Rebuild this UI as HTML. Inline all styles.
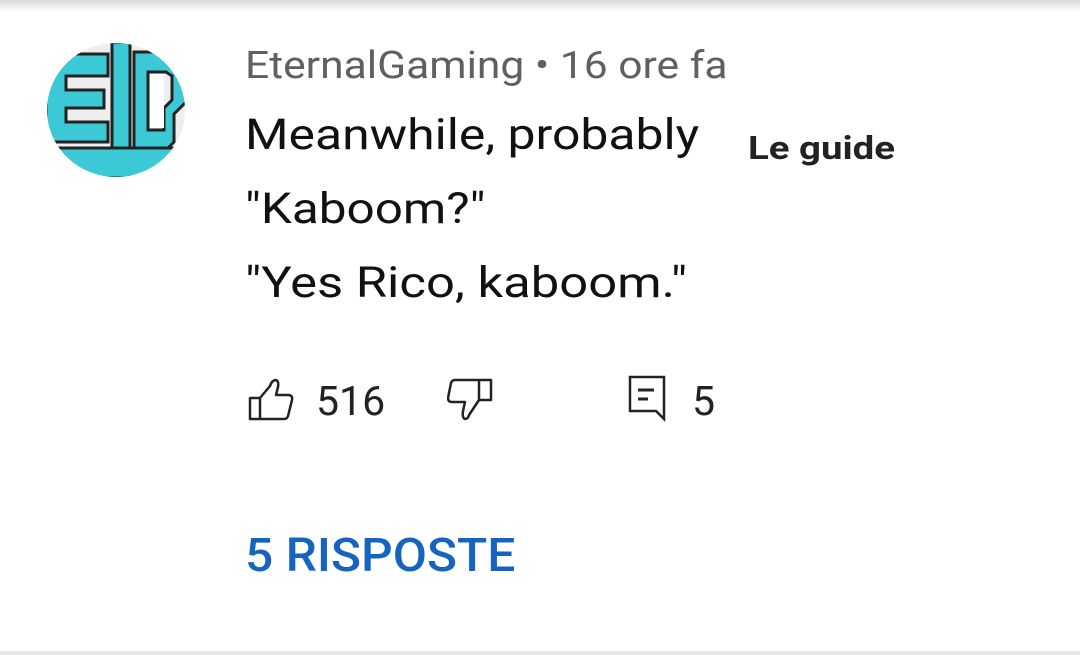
<!DOCTYPE html>
<html><head><meta charset="utf-8"><style>
html,body{margin:0;padding:0;}
body{width:1080px;height:655px;background:#fff;position:relative;overflow:hidden;font-family:"Roboto","Liberation Sans",sans-serif;}
.shadow{position:absolute;left:0;top:0;width:1080px;height:12px;background:linear-gradient(#d8d8d8,#fff);}
.bottom{position:absolute;left:0;top:651px;width:1080px;height:4px;background:#e6e6e6;}
.t{position:absolute;white-space:nowrap;transform-origin:0 50%;}
</style></head><body>
<div class="shadow"></div>
<svg style="position:absolute;left:46px;top:42px" width="140" height="136" viewBox="0 0 140 136">
<defs><clipPath id="c"><ellipse cx="70" cy="68" rx="69" ry="67"/></clipPath></defs>
<g clip-path="url(#c)">
<rect width="140" height="136" fill="#eeeeee"/>
<g fill="#3cc9d6" stroke="#222" stroke-width="3">
<path d="M0 12 H62 V34 H20 V48 H58 V66 H20 V80 H62 V100 H0 Z"/>
<path d="M66 0 H84 V136 H66 Z"/>
<path d="M88 10 H128 L140 22 V60 L128 72 V100 L118 110 H88 Z M102 30 V88 H118 V66 L126 58 V34 L120 30 Z"/>
<path d="M0 106 H140 V136 H0 Z"/>
</g>
<rect x="104" y="32" width="14" height="54" fill="#fff"/>
</g>
</svg>
<div class="t" style="left:245px;top:44px;font-size:38px;color:#606060;transform:scaleX(1.12);">EternalGaming • 16 ore fa</div>
<div class="t" style="left:245px;top:110px;font-size:43px;color:#111;transform:scaleX(1.16);">Meanwhile, probably</div>
<div class="t" style="left:748px;top:129px;font-size:32px;font-weight:bold;color:#222;transform:scaleX(1.2);">Le guide</div>
<div class="t" style="left:245px;top:184px;font-size:43px;color:#111;transform:scaleX(1.15);">"Kaboom?"</div>
<div class="t" style="left:245px;top:258px;font-size:43px;color:#111;transform:scaleX(1.18);">"Yes Rico, kaboom."</div>
<svg style="position:absolute;left:248px;top:378px" width="48" height="44" viewBox="0 0 48 44" fill="none" stroke="#222" stroke-width="2.5" stroke-linejoin="round">
<path d="M2 20 H12 V41 H2 Z M12 20 L22 8 Q24 2 28 2 Q31 3 30 9 L28 17 H41 Q45 18 44 22 L40 38 Q39 41 36 41 H12"/>
</svg>
<div class="t" style="left:316px;top:378px;font-size:41px;color:#222;">516</div>
<svg style="position:absolute;left:447px;top:378px" width="46" height="44" viewBox="0 0 46 44" fill="none" stroke="#222" stroke-width="2.5" stroke-linejoin="round">
<path d="M32 2 H44 V22 H32 Z M32 2 H8 Q5 2 4 5 L1 20 Q1 24 5 24 H18 L16 33 Q15 40 18 41 Q21 41 22 37 L32 22"/>
</svg>
<svg style="position:absolute;left:628px;top:375px" width="40" height="48" viewBox="0 0 40 48" fill="none" stroke="#222" stroke-width="2.5">
<path d="M2 2 H36 V44 L28 36 H2 Z"/>
<path d="M10 15 H26 M10 24 H20" stroke-width="3"/>
</svg>
<div class="t" style="left:692px;top:378px;font-size:41px;color:#222;">5</div>
<div class="t" style="left:245px;top:529px;font-size:46px;font-weight:500;color:#1565c0;transform:scaleX(1.08);">5 RISPOSTE</div>
<div class="bottom"></div>
</body></html>
